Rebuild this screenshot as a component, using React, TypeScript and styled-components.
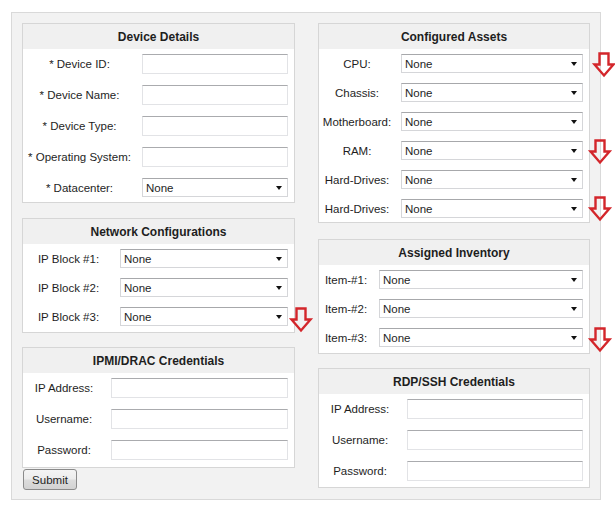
import styled, { createGlobalStyle } from 'styled-components'

const GlobalStyle = createGlobalStyle`
  body {
    margin: 0;
    background: #ffffff;
    font-family: "Liberation Sans", Arial, sans-serif;
    font-size: 12px;
    color: #1e1e1e;
  }
`

const Page = styled.form`
  box-sizing: border-box;
  width: 590px;
  height: 488px;
  margin: 12px 0 0 11px;
  padding: 10px;
  background: #f2f2f2;
  border: 1px solid #d9d9d9;
  display: grid;
  grid-template-columns: 273px 272px;
  column-gap: 23px;
  align-items: start;
`

const Column = styled.div`
  display: flex;
  flex-direction: column;
`

const Panel = styled.fieldset<{ $height: number; $gap: number }>`
  box-sizing: border-box;
  height: ${(p) => p.$height}px;
  margin: 0 0 ${(p) => p.$gap}px 0;
  padding: 0;
  min-width: 0;
  border: 1px solid #d6d6d6;
  background: #ffffff;
`

const PanelTitle = styled.legend`
  float: left;
  box-sizing: border-box;
  width: 100%;
  height: 25px;
  padding: 1px 0 0;
  line-height: 25px;
  text-align: center;
  font-weight: bold;
  background: #f0f0f0;
`

const Rows = styled.div<{ $label: number; $gap: number }>`
  clear: both;
  display: grid;
  grid-template-columns: ${(p) => p.$label}px 1fr;
  column-gap: 6px;
  row-gap: ${(p) => p.$gap}px;
  padding: 5px 6px 0 0;
  align-items: center;
`

const Label = styled.label`
  text-align: center;
  white-space: nowrap;
  font-size: 11.5px;
`

const Field = styled.div`
  position: relative;
  display: flex;
`

const TextBox = styled.input`
  box-sizing: border-box;
  width: 100%;
  height: 20px;
  margin: 0;
  padding: 0 4px;
  border: 1px solid #e2e3e6;
  border-top-color: #aaabae;
  background: #ffffff;
  font: inherit;
`

const Combo = styled.div`
  position: relative;
  width: 100%;

  &::after {
    content: '';
    position: absolute;
    right: 6px;
    top: 8px;
    border-left: 3.5px solid transparent;
    border-right: 3.5px solid transparent;
    border-top: 4px solid #111;
    pointer-events: none;
  }
`

const ComboSelect = styled.select`
  box-sizing: border-box;
  display: block;
  width: 100%;
  height: 19px;
  margin: 0;
  padding: 0 3px;
  appearance: none;
  border: 1px solid #d5d6d9;
  border-top-color: #a7a8ab;
  border-radius: 0;
  background: #ffffff;
  color: #1e1e1e;
  font: inherit;
  font-size: 11.5px;
`

const Marker = styled.svg<{ $dx: number; $dy: number }>`
  position: absolute;
  left: calc(100% + ${(p) => p.$dx}px);
  top: ${(p) => p.$dy}px;
  width: 22px;
  height: 25px;
  overflow: visible;
`

const SubmitButton = styled.button`
  align-self: flex-start;
  box-sizing: border-box;
  width: 54px;
  height: 21px;
  margin: -14px 0 0 1px;
  padding: 0;
  border: 1px solid #8a8a8a;
  border-radius: 3px;
  background: linear-gradient(#f4f4f4 0%, #ececec 48%, #dcdcdc 52%, #d2d2d2 100%);
  color: #1e1e1e;
  font: inherit;
  font-size: 11.5px;
`

function DownMarker({ dx = 4, dy = -2 }: { dx?: number; dy?: number }) {
  return (
    <Marker $dx={dx} $dy={dy} viewBox="0 0 22 25">
      <path
        d="M6.5 1.5 H15.5 V12.5 H20.5 L11 23.5 L1.5 12.5 H6.5 Z"
        fill="none"
        stroke="#d3262b"
        strokeWidth="2.4"
        strokeLinejoin="miter"
      />
    </Marker>
  )
}

function Text({ label }: { label: string }) {
  return (
    <>
      <Label>{label}</Label>
      <Field>
        <TextBox type="text" />
      </Field>
    </>
  )
}

function Pick({ label, marker }: { label: string; marker?: { dx: number; dy: number } }) {
  return (
    <>
      <Label>{label}</Label>
      <Field>
        <Combo>
          <ComboSelect defaultValue="None">
            <option>None</option>
          </ComboSelect>
        </Combo>
        {marker && <DownMarker dx={marker.dx} dy={marker.dy} />}
      </Field>
    </>
  )
}

export default function App() {
  return (
    <>
      <GlobalStyle />
      <Page onSubmit={(e) => e.preventDefault()}>
        <Column>
          <Panel $height={180} $gap={15}>
            <PanelTitle>Device Details</PanelTitle>
            <Rows $label={113} $gap={11}>
              <Text label="* Device ID:" />
              <Text label="* Device Name:" />
              <Text label="* Device Type:" />
              <Text label="* Operating System:" />
              <Pick label="* Datacenter:" />
            </Rows>
          </Panel>

          <Panel $height={115} $gap={14}>
            <PanelTitle>Network Configurations</PanelTitle>
            <Rows $label={91} $gap={10}>
              <Pick label="IP Block #1:" />
              <Pick label="IP Block #2:" />
              <Pick label="IP Block #3:" marker={{ dx: 2, dy: 0 }} />
            </Rows>
          </Panel>

          <Panel $height={121} $gap={15}>
            <PanelTitle>IPMI/DRAC Credentials</PanelTitle>
            <Rows $label={82} $gap={11}>
              <Text label="IP Address:" />
              <Text label="Username:" />
              <Text label="Password:" />
            </Rows>
          </Panel>

          <SubmitButton type="submit">Submit</SubmitButton>
        </Column>

        <Column>
          <Panel $height={200} $gap={16}>
            <PanelTitle>Configured Assets</PanelTitle>
            <Rows $label={76} $gap={10}>
              <Pick label="CPU:" marker={{ dx: 10, dy: -2 }} />
              <Pick label="Chassis:" />
              <Pick label="Motherboard:" />
              <Pick label="RAM:" marker={{ dx: 6, dy: -2 }} />
              <Pick label="Hard-Drives:" />
              <Pick label="Hard-Drives:" marker={{ dx: 6, dy: -3 }} />
            </Rows>
          </Panel>

          <Panel $height={115} $gap={14}>
            <PanelTitle>Assigned Inventory</PanelTitle>
            <Rows $label={54} $gap={10}>
              <Pick label="Item-#1:" />
              <Pick label="Item-#2:" />
              <Pick label="Item-#3:" marker={{ dx: 6, dy: -1 }} />
            </Rows>
          </Panel>

          <Panel $height={120} $gap={0}>
            <PanelTitle>RDP/SSH Credentials</PanelTitle>
            <Rows $label={82} $gap={11}>
              <Text label="IP Address:" />
              <Text label="Username:" />
              <Text label="Password:" />
            </Rows>
          </Panel>
        </Column>
      </Page>
    </>
  )
}
